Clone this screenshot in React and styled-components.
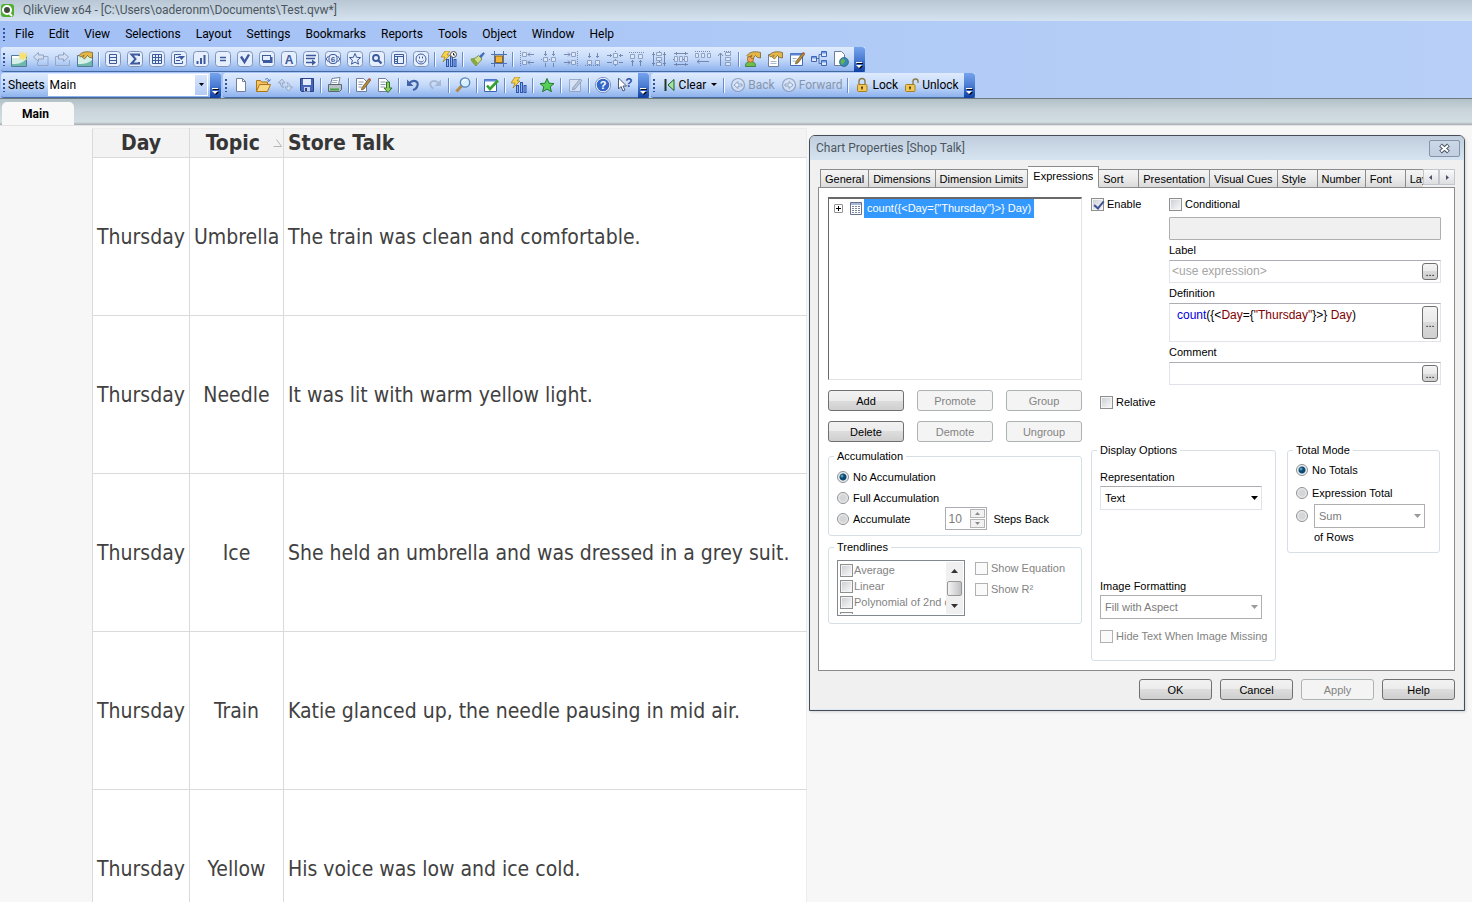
import React, { useState } from "react";
import styled, { createGlobalStyle, css } from "styled-components";

const GlobalStyle = createGlobalStyle`
  * {
    box-sizing: border-box;
  }

  body {
    margin: 0;
    overflow: hidden;
    background: #f7f7f7;
    color: #000;
    font-family: Roboto, "Open Sans", sans-serif;
    font-size: 12px;
  }

  button, input, select, textarea {
    margin: 0;
    font: inherit;
    color: inherit;
  }
`;

const AppCont = styled.div`
  display: flex;
  flex-direction: column;
  height: 100vh;
  overflow: hidden;
`;

/* ---------- window chrome ---------- */

const WindowTitle = styled.header`
  display: flex;
  align-items: center;
  gap: 7px;
  height: 21px;
  padding: 0 0 2px;
  background: linear-gradient(#b9c7d4, #d5e3f0);
  color: #4c5660;
`;

const CommandArea = styled.div`
  background: linear-gradient(90deg, #a2bff6, #b0cbf6 60%, #b8d0f7);
  border-bottom: 1px solid #6f7a80;
`;

const MenuBar = styled.nav`
  display: flex;
  align-items: center;
  gap: 1px;
  height: 26px;
  padding-left: 1px;
`;

const MenuItem = styled.button`
  border: 0;
  background: none;
  padding: 0 7px;
  line-height: 18px;
  font-size: 12px;
`;

const Grip = styled.span`
  flex: none;
  width: ${(props) => props.$width || 7}px;
  height: 14px;
  background: radial-gradient(circle, #33549c 1px, transparent 1px) 0 0 / 4px 4px
    repeat-y;
  margin-left: 1px;
`;

const ToolbarRow = styled.div`
  display: flex;
  gap: 2px;
  padding: 0 0 0 1px;
  margin-bottom: ${(props) => (props.$last ? 0 : 1)}px;
`;

const Toolbar = styled.div`
  display: flex;
  align-items: center;
  height: 25px;
  background: linear-gradient(#dfebfe, #c5daf9 50%, #8db2ee);
  border-bottom: 1px solid #44699f;
  border-radius: 3px 0 0 3px;
`;

const ToolButton = styled.button`
  display: flex;
  align-items: center;
  justify-content: center;
  gap: 2px;
  height: 22px;
  min-width: 22px;
  border: 0;
  background: none;
  padding: 0 ${(props) => (props.$text ? 3 : 0)}px;
  white-space: nowrap;
  color: ${(props) => (props.disabled ? "#8795ac" : "#000")};

  svg {
    flex: none;
    opacity: ${(props) => (props.disabled ? 0.75 : 1)};
  }
`;

const Separator = styled.span`
  width: 6px;
  height: 15px;
  background: linear-gradient(90deg, #6a8ccb 1px, #f3f8ff 1px) center / 2px 100%
    no-repeat;
`;

const Overflow = styled.button`
  display: flex;
  align-items: flex-end;
  justify-content: center;
  width: 11px;
  height: 25px;
  margin-left: ${(props) => props.$gap || 0}px;
  border: 0;
  padding: 0 0 3px;
  background: linear-gradient(#76a3ec, #4a7cd3 50%, #0d3ea2);
  border-radius: 0 3px 3px 0;
`;

const SheetLabel = styled.label`
  margin-right: 3px;
`;

const Combo = styled.span`
  position: relative;
  display: block;
  width: ${(props) => props.$width};

  svg {
    position: absolute;
    right: 4px;
    top: 50%;
    margin-top: -2px;
    pointer-events: none;
  }
`;

const SheetSelect = styled.select`
  appearance: none;
  display: block;
  width: 100%;
  height: 22px;
  border: 1px solid #fff;
  border-radius: 0;
  padding: 0 16px 0 1px;
  background: linear-gradient(#d7e5fb, #b3ccf5) right / 12px 100% no-repeat #fff;
`;

const SheetTabs = styled.div`
  display: flex;
  align-items: flex-end;
  height: 26px;
  padding-left: 2px;
  background: linear-gradient(#b2c0c7, #c8d4da 40%, #d2dde2 88%, #a5adb1);
`;

const SheetTab = styled.button`
  width: 72px;
  height: 23px;
  border: 0;
  border-radius: 5px 5px 0 0;
  padding: 0 5px 0 0;
  background: #f8f8f8;
  font: bold 12px Roboto, "Open Sans", sans-serif;
`;

/* ---------- straight table ---------- */

const Workspace = styled.main`
  position: relative;
  flex: 1;
  min-height: 0;
  overflow: hidden;
  padding: 2px 0 0 92px;
  border-top: 1px solid #e6e2e4;
`;

const TalkTable = styled.table`
  width: 715px;
  table-layout: fixed;
  border-collapse: collapse;
  background: #fff;
  color: #414141;
  font-family: "DejaVu Sans Condensed", "Noto Sans", sans-serif;
  font-size: 21px;

  th,
  td {
    border: 1px solid #dadada;
    padding: 0 4px;
    text-align: center;
    white-space: nowrap;
  }

  th {
    height: 29px;
    border-top-color: #ececec;
    background: #f3f3f3;
    line-height: 28px;
    color: #363636;
  }

  td {
    height: 158px;
  }

  th:last-child,
  td:last-child {
    text-align: left;
    border-right-color: #ececec;
  }
`;

const SortHead = styled.span`
  display: flex;
  align-items: center;
  justify-content: flex-end;
  gap: 13px;
  margin-right: -3px;
`;

/* ---------- dialog ---------- */

const Dialog = styled.section`
  position: absolute;
  top: 9px;
  right: 7px;
  width: 656px;
  border: 1px solid #454d58;
  border-radius: 6px 6px 0 0;
  background: #f0f0f0;
  box-shadow: inset -1px -1px 0 #dfe8f0, 1px 1px 3px rgba(0, 0, 0, 0.15);
  font-family: "Liberation Sans", Arial, sans-serif;
  font-size: 11px;
  line-height: 14px;
`;

const DialogTitle = styled.div`
  display: flex;
  align-items: center;
  justify-content: space-between;
  height: 24px;
  padding: 0 4px 0 6px;
  border-radius: 5px 5px 0 0;
  background: linear-gradient(#bfcddc, #d6e4f2);
  color: #4c5660;
  font: 12px Roboto, "Open Sans", sans-serif;
`;

const CloseButton = styled.button`
  display: flex;
  align-items: center;
  justify-content: center;
  width: 31px;
  height: 17px;
  border: 1px solid #8592a8;
  border-radius: 2px;
  background: linear-gradient(#cad7e6, #c0cfe1);
  padding: 0;
`;

const DialogBody = styled.div`
  padding: 6px 9px 10px 8px;
`;

const TabStrip = styled.div`
  display: flex;
  align-items: flex-end;
  height: 22px;
  margin-bottom: -1px;
  padding-left: 2px;
`;

const TabList = styled.div`
  display: flex;
  align-items: flex-end;
  flex: 1;
  min-width: 0;
  height: 22px;
  overflow: hidden;
`;

const Tab = styled.button`
  flex: none;
  min-width: 40px;
  height: 19px;
  border: 1px solid #8b8b8b;
  border-left-width: 0;
  padding: 0 4px;
  background: linear-gradient(#f4f4f4, #ebebeb 50%, #dadada);
  text-align: left;

  &:first-child {
    border-left-width: 1px;
  }

  ${(props) =>
    props.$active &&
    css`
      height: 22px;
      padding: 0 5px 3px;
      background: #fff;
      border-bottom-color: #fff;
    `}
`;

const TabScroll = styled.button`
  display: flex;
  align-items: center;
  justify-content: center;
  align-self: flex-start;
  width: 16px;
  height: 16px;
  margin-top: 3px;
  border: 1px solid #c3c6cc;
  padding: 0;
  background: linear-gradient(#fafafa, #dedee2);
`;

const Panel = styled.div`
  display: grid;
  grid-template-columns: 254px 1fr;
  column-gap: 9px;
  border: 1px solid #8b8b8b;
  padding: 9px 13px 9px 9px;
  background: #fff;
`;

const ExpressionTree = styled.div`
  display: flex;
  align-items: flex-start;
  height: 183px;
  padding: 0 0 0 5px;
  border: 1px solid #e3e3e3;
  border-top: 2px solid #696969;
  border-left-color: #696969;
`;

const TreeToggle = styled.button`
  width: 9px;
  height: 9px;
  margin: 5px 7px 0 0;
  border: 1px solid #919191;
  border-radius: 1px;
  padding: 0;
  background: linear-gradient(#000, #000) center / 5px 1px no-repeat,
    linear-gradient(#000, #000) center / 1px 5px no-repeat, #fff;
`;

const TreeItem = styled.span`
  height: 19px;
  margin-left: 2px;
  padding: 0 3px;
  background: #3399ff;
  color: #fff;
  line-height: 19px;
`;

const ButtonGrid = styled.div`
  display: grid;
  grid-template-columns: repeat(3, 76px);
  justify-content: space-between;
  row-gap: 10px;
  margin: 10px 0 7px;
`;

const PushButton = styled.button`
  height: 21px;
  border: 1px solid #707070;
  border-radius: 3px;
  padding: 0;
  background: linear-gradient(#f2f2f2, #ebebeb 50%, #dddddd 50%, #cfcfcf);

  &:disabled {
    border-color: #adb2b5;
    background: #f4f4f4;
    color: #838383;
  }
`;

const Footer = styled.div`
  display: flex;
  justify-content: flex-end;
  gap: 8px;
  padding-top: 8px;

  ${PushButton} {
    width: 73px;
  }
`;

const Group = styled.fieldset`
  min-width: 0;
  margin: ${(props) => props.$top || 0}px 0 0;
  border: 1px solid #d5dfe5;
  border-radius: 3px;
  padding: 0 8px ${(props) => props.$bottom}px;
`;

const Legend = styled.legend`
  margin-left: -3px;
  padding: 0 3px;
`;

const Choice = styled.label`
  display: flex;
  align-items: center;
  gap: ${(props) => props.$gap || 3}px;
  height: ${(props) => props.$height || 14}px;
  color: ${(props) => (props.$disabled ? "#838383" : "#000")};
  white-space: nowrap;
`;

const Check = styled.input.attrs({ type: "checkbox" })`
  appearance: none;
  flex: none;
  position: relative;
  width: 13px;
  height: 13px;
  border: 1px solid #8e8f8f;
  background: linear-gradient(135deg, #cdd1d6, #f6f6f6) center / 9px 9px no-repeat
    #f4f4f4;

  &:disabled {
    border-color: #b1b1b1;
    background: #fafafa;
  }

  &:checked::after {
    content: "";
    position: absolute;
    left: 4px;
    top: 0;
    width: 4px;
    height: 8px;
    border: solid #3f5394;
    border-width: 0 2px 2px 0;
    transform: rotate(40deg);
  }
`;

const Radio = styled.input.attrs({ type: "radio" })`
  appearance: none;
  flex: none;
  width: 12px;
  height: 12px;
  border: 1px solid #8e8f8f;
  border-radius: 50%;
  background: radial-gradient(circle, #d4d6d8 3px, #f2f2f2 5px);

  &:checked {
    background: radial-gradient(circle at 4px 4px, #7cc8e6 0, transparent 2px),
      radial-gradient(circle, #0f4a72 3px, #e9eff3 4px);
  }
`;

const RadioRow = styled.div`
  display: flex;
  align-items: center;
  height: ${(props) => props.$height}px;
`;

const AccumulationRows = styled.div`
  padding-top: 3px;
`;

const Spinner = styled.span`
  display: flex;
  align-items: center;
  width: 42px;
  height: 23px;
  margin: 0 6px 0 35px;
  border: 1px solid #abadb3;
  padding: 0 1px 0 2px;
  background: #fff;
`;

const SpinnerInput = styled.input`
  flex: 1;
  min-width: 0;
  border: 0;
  padding: 0;
  background: none;
  color: #7b7b7b;
  font-size: 12px;
`;

const SpinButtons = styled.span`
  display: flex;
  flex-direction: column;
  gap: 1px;
`;

const SpinButton = styled.button`
  display: flex;
  align-items: center;
  justify-content: center;
  width: 15px;
  height: 9px;
  border: 1px solid #b5b5b5;
  padding: 0;
  background: #f2f2f2;
`;

const TrendRow = styled.div`
  display: flex;
  gap: 10px;
  padding-top: 6px;
`;

const TrendList = styled.div`
  display: flex;
  width: 128px;
  height: 56px;
  overflow: hidden;
  border: 1px solid #828790;
  padding: 1px 1px 1px 2px;
`;

const TrendItems = styled.div`
  flex: 1;
  min-width: 0;
  overflow: hidden;

  ${Check} {
    border-color: #8e8f8f;
    background: linear-gradient(135deg, #cdd1d6, #f6f6f6) center / 9px 9px
      no-repeat #f4f4f4;
  }
`;

const ScrollBar = styled.div`
  display: flex;
  flex-direction: column;
  align-items: center;
  justify-content: space-between;
  width: 17px;
  background: #f0f0f0;
`;

const ScrollArrow = styled.button`
  display: flex;
  align-items: center;
  justify-content: center;
  width: 17px;
  height: 17px;
  border: 0;
  padding: 0;
  background: none;
`;

const ScrollThumb = styled.span`
  width: 15px;
  height: 15px;
  border: 1px solid #989898;
  border-radius: 2px;
  background: linear-gradient(90deg, #f3f3f3, #d6d6d8 60%, #bfc0c4);
`;

const TrendChecks = styled.div`
  display: flex;
  flex-direction: column;
  gap: 7px;
  padding-top: 1px;
`;

const Settings = styled.div`
  display: flex;
  flex-direction: column;
`;

const FieldGrid = styled.div`
  display: grid;
  grid-template-columns: 78px 1fr;
  align-items: start;
`;

const Fields = styled.div`
  display: flex;
  flex-direction: column;
`;

const FieldLabel = styled.label`
  display: block;
  margin: 3px 0;
`;

const FieldBox = styled.div`
  display: flex;
  align-items: stretch;
  height: ${(props) => props.$height || 23}px;
  border: 1px solid #e2e3ea;
  border-top-color: #abadb3;
  padding: 2px;
  background: #fff;
`;

const TextField = styled.input`
  flex: 1;
  min-width: 0;
  border: 0;
  padding: 0 0 2px;
  background: none;
  font-size: 12px;

  &::placeholder {
    color: #a5a5a5;
  }
`;

const ConditionField = styled.input`
  width: 100%;
  height: 23px;
  margin-top: 6px;
  border: 1px solid #afafaf;
  border-radius: 1px;
  background: #f0f0f0;
`;

const MoreButton = styled.button`
  width: 16px;
  border: 1px solid #707070;
  border-radius: 3px;
  padding: 0;
  background: linear-gradient(#f4f4f4, #e9e9e9 50%, #dadada 50%, #d0d0d0);
`;

const CodeField = styled.div`
  display: grid;
  flex: 1;
  font-size: 12px;
  line-height: 16px;
`;

const CodeInput = styled.textarea`
  grid-area: 1 / 1;
  border: 0;
  padding: 1px 5px;
  background: none;
  color: transparent;
  caret-color: #000;
  resize: none;
  overflow: hidden;
`;

const CodeHighlight = styled.pre`
  grid-area: 1 / 1;
  margin: 0;
  padding: 1px 5px;
  font: inherit;
  pointer-events: none;
`;

const Fn = styled.span`
  color: #0000e0;
`;

const Field = styled.span`
  color: #800000;
`;

const RelativeRow = styled.div`
  padding: 10px 0 34px 9px;
`;

const Groups = styled.div`
  display: grid;
  grid-template-columns: 185px 153px;
  column-gap: 11px;
  align-items: start;
`;

const OptionLabel = styled.label`
  display: block;
  padding-top: ${(props) => props.$top}px;
  margin-bottom: 2px;
`;

const DropDown = styled.select`
  appearance: none;
  display: block;
  width: 100%;
  height: 24px;
  border: 1px solid #e2e3ea;
  border-top-color: #abadb3;
  border-radius: 0;
  padding: 0 16px 0 4px;
  background: #fff;
  color: #000;

  &:disabled {
    border-color: #afafaf;
    color: #7b7b7b;
    opacity: 1;
  }
`;

const HideRow = styled.div`
  padding-top: 10px;
`;

const TotalRows = styled.div`
  padding-top: 1px;
`;

const OfRows = styled.div`
  padding: 3px 0 0 18px;
`;

/* ---------- drawings ---------- */

const Svg = ({ w = 16, h = 16, children }) => (
  <svg width={w} height={h} viewBox={`0 0 ${w} ${h}`} fill="none" aria-hidden="true">
    {children}
  </svg>
);

const Arrow = ({ color = "#000" }) => (
  <Svg w={7} h={4}>
    <path d="M0 0h7L3.500 4z" fill={color} />
  </Svg>
);

const Boxed = ({ children }) => (
  <Svg>
    <rect x=".5" y=".5" width="15" height="15" rx="3" fill="#e6effd" stroke="#8094b8" />
    {children}
  </Svg>
);

const blue = "#3d5a9e";
const grey = "#7f90ad";

const Pencil = ({ color = "#b98a35" }) => (
  <>
    <path d="M7 10.500 13.500 2l2 1.500L9 12l-2.500 1z" fill={color} stroke="#4d4433" strokeWidth=".6" />
    <path d="m13.500 2 .8-1 1.700 1.300-.6 1z" fill="#c4432f" />
  </>
);

const Bolt = () => (
  <path d="M4 0h5L6 4h3L2 11l2-5H0z" fill="#f7d34c" stroke="#a27a1c" strokeWidth=".7" />
);

const Bars = () => (
  <>
    <rect x="5.500" y="8.500" width="2" height="7" fill="#8db2f0" stroke="#2e55ab" />
    <rect x="9.500" y="5.500" width="2" height="10" fill="#8db2f0" stroke="#2e55ab" />
    <rect x="13" y="8.500" width="2" height="7" fill="#8db2f0" stroke="#2e55ab" />
  </>
);

const Hand = () => (
  <path d="M2 4.500C5 .5 10 0 15.500 1.500V7l-3-.5-2-2L7.500 8 5.500 6.500l1.500-2L3.500 6z" fill="#e3b646" stroke="#6b561f" strokeWidth=".7" />
);

const Sheet = ({ x = 2 }) => (
  <path d={`M${x} 1.500h7l3 3v10h-10z`} fill="#fff" stroke="#6f7f9b" />
);

const Padlock = ({ open }) => (
  <Svg>
    <path
      d={open ? "M9 8V4.500a2.500 2.500 0 0 1 5 0V6" : "M5 8V4.500a3 3 0 0 1 6 0V8"}
      stroke="#8a7a4c"
      strokeWidth="1.400"
    />
    <rect x={open ? 1.5 : 3.5} y="7.500" width="9.500" height="7" rx="1" fill="#f2c852" stroke="#a87f25" />
    <path d={open ? "M6 9.500v3M5 10.500h2" : "M8 9.500v3M7 10.500h2"} stroke="#4e3a0c" strokeWidth="1.300" />
  </Svg>
);

const CircleArrow = ({ flip }) => (
  <Svg>
    <circle cx="8" cy="8" r="6.500" fill="#d9e4f6" stroke={grey} strokeWidth="1.200" />
    <path
      d={flip ? "M4 7h4V4.500L12 8l-4 3.500V9H4z" : "M12 7H8V4.500L4 8l4 3.500V9h4z"}
      fill="#eef4fd"
      stroke={grey}
    />
  </Svg>
);

// dotted guide line with two boxes and small arrows
const Align = ({ guide, boxes, arrows }) => (
  <Svg>
    <path d={guide} stroke="#5b6e96" strokeDasharray="1 1" />
    <path d={boxes} fill="#e3ecfa" stroke="#7d8fb3" />
    <path d={arrows} stroke="#5b6e96" />
  </Svg>
);

const icons = {
  newSheet: (
    <Svg w={18}>
      <path d="M1.500 4.500h15v11h-15z" fill="#d6f0e8" stroke="#55799a" />
      <path d="M2 15h14V8C12 13 6 13 2 13z" fill="#6fb8ac" />
      <path d="M2 5h7v2H2z" fill="#fff" />
      <path d="m13 0 1 2.500L17 1l-1 3 2 1-2 1 1 3-3-1.500L13 10l-1-2.500L9 9l1-3-2-1 2-1-1-3 3 1.500z" fill="#f6e274" />
    </Svg>
  ),
  prevSheet: (
    <Svg>
      <path d="M5.500 4V1.500L.5 6l5 4.500V8h5V4z" fill="#d5dfef" stroke={grey} />
      <path d="M11 5.500h4v9H4.500V11" stroke="#8d9cb8" />
    </Svg>
  ),
  nextSheet: (
    <Svg>
      <path d="M8.500 4V1.500l5 4.500-5 4.500V8h-5V4z" fill="#d5dfef" stroke={grey} />
      <path d="M3 5.500H.5v9h14V9" stroke="#8d9cb8" />
    </Svg>
  ),
  sheetProps: (
    <Svg>
      <path d="M.5 4.500h15v11H.5z" fill="#d6f0e8" stroke="#55799a" />
      <path d="M1 15h14V9C11 13 5 13 1 13z" fill="#6fb8ac" />
      <Hand />
    </Svg>
  ),
  list: (
    <Boxed>
      <path d="M4.500 3.500h7v9h-7zM4.500 6.500h7M4.500 9.500h7" stroke={blue} />
    </Boxed>
  ),
  stats: (
    <Boxed>
      <path d="M12 5V3.500H4.500L8.500 8l-4 4.500H12V11" stroke={blue} strokeWidth="2" />
    </Boxed>
  ),
  tableBox: (
    <Boxed>
      <path d="M3.500 3.500h9v9h-9zM3.500 6.500h9M3.500 9.500h9M6.500 3.500v9M9.500 3.500v9" stroke={blue} />
    </Boxed>
  ),
  multi: (
    <Boxed>
      <path d="M10 3.500H3.500v9h8V10M5 6.500h3M5 9.500h4" stroke={blue} />
      <path d="M7 5h7l-3.500 4z" fill={blue} />
    </Boxed>
  ),
  chart: (
    <Boxed>
      <path d="M4.500 13v-3M8 13V7M11.500 13V4" stroke={blue} strokeWidth="2" />
    </Boxed>
  ),
  input: (
    <Boxed>
      <path d="M5 6.500h6M5 9.500h6" stroke={blue} strokeWidth="1.500" />
    </Boxed>
  ),
  current: (
    <Boxed>
      <path d="M4 5.500 7.500 11 12 3.500" stroke={blue} strokeWidth="2.400" />
    </Boxed>
  ),
  buttonObj: (
    <Boxed>
      <rect x="3.500" y="4.500" width="8" height="5" stroke={blue} />
      <path d="M4 11h8.500V6" stroke={blue} strokeWidth="2" />
    </Boxed>
  ),
  textObj: (
    <Boxed>
      <text x="8" y="12.500" textAnchor="middle" fontSize="12" fontWeight="bold" fontFamily="Liberation Sans" fill={blue}>
        A
      </text>
    </Boxed>
  ),
  lineObj: (
    <Boxed>
      <path d="M3 4.500h10M3 7.500h9M3 11.500h6" stroke={blue} strokeWidth="1.600" />
      <path d="m9 8.500 4 3-4 3z" fill={blue} />
    </Boxed>
  ),
  slider: (
    <Boxed>
      <path d="m3.500 5-2.500 3 2.500 3M12.500 5 15 8l-2.500 3" stroke={blue} />
      <rect x="4" y="3.500" width="8" height="9" rx="3" stroke={blue} />
      <text x="8" y="11" textAnchor="middle" fontSize="8" fontWeight="bold" fontFamily="Liberation Sans" fill={blue}>
        6
      </text>
    </Boxed>
  ),
  bookmarkObj: (
    <Boxed>
      <path d="m8 2.500 1.600 3.800 4 .3-3 2.600.9 4L8 11.100l-3.500 2.100.9-4-3-2.600 4-.3z" stroke={blue} />
    </Boxed>
  ),
  searchObj: (
    <Boxed>
      <circle cx="7" cy="7" r="3" stroke={blue} strokeWidth="1.800" />
      <path d="m9.500 9.500 3 3" stroke={blue} strokeWidth="2.400" />
    </Boxed>
  ),
  container: (
    <Boxed>
      <path d="M3.500 3.500h9v9h-9zM3.500 5.500h9M6.500 5v7" stroke={blue} />
      <path d="M4 8.500h2M4 10.500h2" stroke={blue} />
    </Boxed>
  ),
  custom: (
    <Boxed>
      <circle cx="8" cy="8" r="5" stroke={blue} />
      <path d="M6.500 5.500v2M9.500 5.500v2M5.500 9.500c1 2 4 2 5 0" stroke={blue} />
    </Boxed>
  ),
  timeChart: (
    <Svg>
      <Bars />
      <Bolt />
      <circle cx="12.500" cy="3.500" r="3" fill="#fff" stroke="#4c4c4c" />
      <path d="M12.500 2v2h1.500" stroke="#222" />
    </Svg>
  ),
  brush: (
    <Svg>
      <path d="m10.500 5 4-3.500 1 1L12 7z" fill="#3a6fd0" stroke="#3a5a97" strokeWidth=".6" />
      <path d="M2 8c3 0 5-1 7.500-3.500L13 8c-2 3-5 5-6 7C5 13 3 11 2 8z" fill="#cfe08d" stroke="#7a8d4a" />
      <path d="M2 8c2 4 4 5 5 7l2-3-4-4.500z" fill="#87a63e" />
    </Svg>
  ),
  designGrid: (
    <Svg>
      <path d="M3.500 0v16M12.500 0v16M0 3.500h16M0 12.500h16" stroke="#4e72b7" />
      <rect x="4.500" y="5" width="7" height="6.500" fill="#f2b535" stroke="#91671b" />
    </Svg>
  ),
  alignLeft: (
    <Align guide="M1.500 0v16" boxes="M3.500 1.500h4v4h-4zM3.500 9.500h4v4h-4z" arrows="M9 3.500h6M11 1.500l-2 2 2 2M9 11.500h6M11 9.500l-2 2 2 2" />
  ),
  centerH: (
    <Align guide="M0 8.500h16" boxes="M2.500 6.500h4v4h-4zM10.500 6.500h4v4h-4z" arrows="M4.500 0v5M3 3.500h3M12.500 0v5M11 3.500h3M4.500 12v4M12.500 12v4" />
  ),
  alignRight: (
    <Align guide="M14.500 0v16" boxes="M8.500 1.500h4v4h-4zM8.500 9.500h4v4h-4z" arrows="M1 3.500h6M5 1.500l2 2-2 2M1 11.500h6M5 9.500l2 2-2 2" />
  ),
  alignBottom: (
    <Align guide="M0 14.500h16" boxes="M2.500 9.500h4v4h-4zM10.500 9.500h4v4h-4z" arrows="M4.500 2v5M3 5.500h3M12.500 2v5M11 5.500h3" />
  ),
  centerV: (
    <Align guide="M8.500 0v16" boxes="M6.500 2.500h4v4h-4zM6.500 9.500h4v4h-4z" arrows="M0 4.500h5M3.500 3v3M16 4.500h-4M13.500 3v3M0 11.500h5M16 11.500h-4" />
  ),
  alignTop: (
    <Align guide="M0 1.500h16" boxes="M1.500 3.500h4v4h-4zM9.500 3.500h4v4h-4z" arrows="M3.500 9v6M2 10.500h3M11.500 9v6M10 10.500h3" />
  ),
  spaceV: (
    <Align guide="M8.500 0v16" boxes="M5.500 1.500h5v3h-5zM5.500 6.500h5v3h-5zM5.500 11.500h5v3h-5z" arrows="M2.500 1v14M1 3.500h3M1 12.500h3M13.500 1v14M12 3.500h3M12 12.500h3" />
  ),
  spaceH: (
    <Align guide="M0 8.500h16" boxes="M1.500 5.500h3v5h-3zM6.500 5.500h3v5h-3zM11.500 5.500h3v5h-3z" arrows="M1 2.500h14M3.500 1v3M12.500 1v3M1 13.500h14M3.500 12v3M12.500 12v3" />
  ),
  stackLeft: (
    <Align guide="M0 .5h16" boxes="M.5 2.500h3v4h-3zM6.500 2.500h3v4h-3zM12.500 2.500h3v4h-3z" arrows="M2 10.500h12M4.500 8.500l-2.500 2 2.500 2" />
  ),
  stackTop: (
    <Align guide="M7 .5h8" boxes="M8.500 1.500h5v3h-5zM8.500 6.500h5v3h-5zM8.500 11.500h5v3h-5z" arrows="M3.500 2v13M1 5l2.500-3L6 5" />
  ),
  userPrefs: (
    <Svg>
      <path d="M.5 15.500c0-4 2-5 5-5s5 1 5 5z" fill="#6cbf4c" stroke="#396f2a" strokeWidth=".8" />
      <circle cx="5.500" cy="8" r="3.200" fill="#f5a35a" stroke="#b1661f" strokeWidth=".8" />
      <Hand />
    </Svg>
  ),
  docProps: (
    <Svg>
      <path d="M1.500 3.500h10v12h-10z" fill="#fff" stroke="#6f7f9b" />
      <path d="M3.500 10.500h6M3.500 12.500h6" stroke="#a9b7cf" />
      <Hand />
    </Svg>
  ),
  editSheet: (
    <Svg>
      <path d="M1.500 2.500h12v12h-12z" fill="#fff" stroke="#476bb2" />
      <path d="M1.500 2.500h12v2h-12z" fill="#5c86d4" />
      <path d="M3.500 7.500h4M3.500 10h3" stroke="#9db0d1" />
      <Pencil />
    </Svg>
  ),
  tableViewer: (
    <Svg>
      <path d="M6 7.500h2M8 3.500v9M8 3.500h2M8 12.500h2" stroke="#506ea8" />
      <path d="M.5 5.500h5v5h-5zM10.500.5h5v5h-5zM10.500 9.500h5v5h-5z" fill="#dce9fd" stroke="#4167b4" />
      <path d="M1 6h4v1.500H1zM11 1h4v1.500h-4zM11 10h4v1.500h-4z" fill="#6f9be8" />
    </Svg>
  ),
  webView: (
    <Svg>
      <path d="M1.500.5h7l3 3v11h-10z" fill="#fff" stroke="#6f7f9b" />
      <circle cx="11" cy="11" r="4.500" fill="#3987b5" stroke="#2a607f" strokeWidth=".7" />
      <path d="M8 9c2-2 4-1 4 1s-2 1-2 4c-2-1-3-3-2-5z" fill="#62b64f" />
    </Svg>
  ),
  newDoc: (
    <Svg>
      <path d="M3.500 1.500h6l3 3v10h-9z" fill="#fff" stroke="#72809b" />
      <path d="M9.500 1.500v3h3" stroke="#72809b" />
    </Svg>
  ),
  open: (
    <Svg>
      <path d="M1.500 14.500v-11h4l1 1.500h6v2" fill="#f6c463" stroke="#a9741b" />
      <path d="m1.500 14.500 3-7h11l-3 7z" fill="#fbd883" stroke="#a9741b" />
      <path d="M10 2.500c2-1.500 4-1 4 1.500M12.500 3.500l1.500 1 1.500-2" stroke="#4973b9" />
    </Svg>
  ),
  reload: (
    <Svg>
      <path d="M5 2 1 6h2.500c0 3 1 4 3 4.500C5.500 9 5.500 8 5.500 6H8z" fill="#c3cfe2" stroke="#7e8eaa" strokeWidth=".8" />
      <path d="m11.500 14 4-4H13c0-3-1-4-3-4.500 1 1.500 1 2.500 1 4.500H8z" fill="#d9e2f0" stroke="#7e8eaa" strokeWidth=".8" />
    </Svg>
  ),
  save: (
    <Svg>
      <path d="M1.500 1.500h13v13h-12l-1-1z" fill="#4664b5" stroke="#2b4186" />
      <path d="M4 2h8v6H4z" fill="#e4ecfb" />
      <path d="M5 10h6v4.500H5z" fill="#c5d1ec" />
      <path d="M6 11h2v3H6z" fill="#2b4186" />
    </Svg>
  ),
  print: (
    <Svg>
      <path d="m5 1.500 8-1-1.500 7h-8z" fill="#fff" stroke="#72809b" />
      <path d="M1.500 7.500h13v5l-2 2h-11z" fill="#b9c2c9" stroke="#5b6670" />
      <path d="M3 12.500h9" stroke="#45a545" strokeWidth="2" />
      <path d="M5.500 3.500h5M5 5.500h5" stroke="#9caac0" />
    </Svg>
  ),
  editScript: (
    <Svg>
      <Sheet x={1.5} />
      <path d="M3.500 5h5M3.500 7.500h4M3.500 10h3" stroke="#8b99b4" />
      <Pencil />
    </Svg>
  ),
  runScript: (
    <Svg>
      <Sheet x={1.5} />
      <path d="M3.500 5h5M3.500 7.500h5M3.500 10h4" stroke="#8b99b4" />
      <path d="M9.500 5h3v6h2.500L11 15.500 7 11h2.500z" fill="#8ed05e" stroke="#39752a" />
    </Svg>
  ),
  undo: (
    <Svg>
      <path d="M4 6.500C8 2 14 4 12.500 8.500 12 10.500 10 12.500 8 13" stroke="#4262a8" strokeWidth="2.200" />
      <path d="M2 2.500V9h6.500z" fill="#4262a8" />
    </Svg>
  ),
  redo: (
    <Svg>
      <path d="M12 6.500C8 2 2 4 3.500 8.500c.5 1.500 1.500 2.500 3 3" stroke="#9cadc9" strokeWidth="2" />
      <path d="M14 2.500V9H7.500z" fill="#9cadc9" />
    </Svg>
  ),
  search: (
    <Svg>
      <path d="m6.500 9-5 5.500" stroke="#b48a45" strokeWidth="3" />
      <circle cx="10" cy="5.500" r="4.700" fill="#d5efff" stroke="#5582b8" strokeWidth="1.300" />
      <path d="M7.500 4.500c1-2 3-2 4-1.500" stroke="#fff" strokeWidth="1.300" />
    </Svg>
  ),
  selections: (
    <Svg>
      <path d="M1.500 2.500h12v12h-12z" fill="#fff" stroke="#3d64b3" />
      <path d="M1.500 2.500h12v2h-12z" fill="#5e88d8" />
      <path d="M4 8.500 7 12l8-8.500" stroke="#35a12f" strokeWidth="2.600" />
    </Svg>
  ),
  quickChart: (
    <Svg>
      <Bars />
      <Bolt />
    </Svg>
  ),
  star: (
    <Svg>
      <path d="m8 1.500 2 4.700 5 .4-3.800 3.200 1.200 4.900L8 12.100l-4.400 2.600 1.200-4.900L1 6.600l5-.4z" fill="#55cf58" stroke="#227a2b" />
    </Svg>
  ),
  notes: (
    <Svg>
      <path d="M2.500 2.500h11v12h-11z" fill="#dce5f4" stroke="#8b9ab5" />
      <path d="m6 10.500 7-8.500 2 1.500-7 8.500-2.500 1z" fill="#b3c0d6" stroke="#71829f" strokeWidth=".8" />
    </Svg>
  ),
  help: (
    <Svg>
      <circle cx="8" cy="8" r="7" fill="#3567c7" stroke="#fff" strokeWidth="1.300" />
      <circle cx="8" cy="8" r="7.600" stroke="#31549c" strokeWidth=".6" />
      <text x="8" y="12" textAnchor="middle" fontSize="11" fontWeight="bold" fontFamily="Liberation Sans" fill="#fff">
        ?
      </text>
    </Svg>
  ),
  whatsThis: (
    <Svg>
      <path d="M1.500 1v11l2.500-2.500L6 14l2-1-2-4h3.500z" fill="#fff" stroke="#4b5977" />
      <text x="12" y="10" textAnchor="middle" fontSize="12" fontWeight="bold" fontFamily="Liberation Sans" fill="#2d52a5">
        ?
      </text>
    </Svg>
  ),
};

const gripWidth = 6;

// a bar stands for a separator, a dash in front for a disabled tool
const objectTools = `newSheet -prevSheet -nextSheet sheetProps | list stats tableBox multi
  chart input current buttonObj textObj lineObj slider bookmarkObj searchObj container
  custom | timeChart | brush designGrid | -alignLeft -centerH -alignRight -alignBottom
  -centerV -alignTop -spaceV -spaceH -stackLeft -stackTop | userPrefs docProps editSheet
  tableViewer webView`.split(/\s+/);

const standardTools = `newDoc open -reload save | print | editScript runScript | undo -redo |
  search | selections | quickChart | star | -notes | help whatsThis`.split(/\s+/);

const menus = [
  "File",
  "Edit",
  "View",
  "Selections",
  "Layout",
  "Settings",
  "Bookmarks",
  "Reports",
  "Tools",
  "Object",
  "Window",
  "Help",
];

const talks = [
  ["Thursday", "Umbrella", "The train was clean and comfortable."],
  ["Thursday", "Needle", "It was lit with warm yellow light."],
  ["Thursday", "Ice", "She held an umbrella and was dressed in a grey suit."],
  ["Thursday", "Train", "Katie glanced up, the needle pausing in mid air."],
  ["Thursday", "Yellow", "His voice was low and ice cold."],
];

const tabs = [
  "General",
  "Dimensions",
  "Dimension Limits",
  "Expressions",
  "Sort",
  "Presentation",
  "Visual Cues",
  "Style",
  "Number",
  "Font",
  "Layout",
];

const trends = ["Average", "Linear", "Polynomial of 2nd d", "Polynomial of 3rd d"];

function Tools({ names }) {
  return names.map((item, i) => {
    if (item === "|") return <Separator key={i} />;
    const name = item.replace("-", "");
    return (
      <ToolButton key={i} aria-label={name} disabled={item[0] === "-"}>
        {icons[name]}
      </ToolButton>
    );
  });
}

function MoreTools({ gap }) {
  return (
    <Overflow aria-label="More buttons" $gap={gap}>
      <Svg w={7} h={7}>
        <path d="M1 1h6v1H1zM1 4h6L4 7z" fill="#000" />
        <path d="M0 0h6v1H0zM0 3h6L3 6z" fill="#fff" />
      </Svg>
    </Overflow>
  );
}

function Toolbars() {
  return (
    <>
      <ToolbarRow>
        <Toolbar>
          <Grip $width={gripWidth} />
          <Tools names={objectTools} />
          <MoreTools gap={2} />
        </Toolbar>
      </ToolbarRow>
      <ToolbarRow $last>
        <Toolbar>
          <Grip $width={gripWidth} />
          <SheetLabel htmlFor="sheet">Sheets</SheetLabel>
          <Combo $width="160px">
            <SheetSelect id="sheet">
              <option>Main</option>
            </SheetSelect>
            <Svg w={5} h={3}>
              <path d="M0 0h5L2.500 3z" fill="#000" />
            </Svg>
          </Combo>
          <MoreTools gap={2} />
        </Toolbar>
        <Toolbar>
          <Grip $width={gripWidth} />
          <Tools names={standardTools} />
          <MoreTools gap={2} />
        </Toolbar>
        <Toolbar>
          <Grip $width={gripWidth} />
          <ToolButton $text>
            <Svg>
              <path d="M4.500 2v12" stroke="#20392a" strokeWidth="2" />
              <path d="M13 2.500v11L7 8z" fill="#a5e3a1" stroke="#1d5b2a" />
            </Svg>
            Clear
            <Svg w={10} h={4}>
              <path d="M3 0h6L6 3z" fill="#000" />
            </Svg>
          </ToolButton>
          <Separator />
          <ToolButton $text disabled>
            <CircleArrow />
            Back
          </ToolButton>
          <ToolButton $text disabled>
            <CircleArrow flip />
            Forward
          </ToolButton>
          <Separator />
          <ToolButton $text>
            <Padlock />
            Lock
          </ToolButton>
          <ToolButton $text>
            <Padlock open />
            Unlock
          </ToolButton>
          <MoreTools gap={2} />
        </Toolbar>
      </ToolbarRow>
    </>
  );
}

function StoreTalk() {
  return (
    <TalkTable>
      <colgroup>
        <col style={{ width: 97 }} />
        <col style={{ width: 94 }} />
        <col />
      </colgroup>
      <thead>
        <tr>
          <th>Day</th>
          <th>
            <SortHead>
              Topic
              <Svg w={9} h={8}>
                <path d="M.5 7.500h8M3.500.5l5 7" stroke="#b5b5b5" />
              </Svg>
            </SortHead>
          </th>
          <th>Store Talk</th>
        </tr>
      </thead>
      <tbody>
        {talks.map(([day, topic, talk]) => (
          <tr key={topic}>
            <td>{day}</td>
            <td>{topic}</td>
            <td>{talk}</td>
          </tr>
        ))}
      </tbody>
    </TalkTable>
  );
}

function ExpressionList() {
  return (
    <>
      <ExpressionTree>
        <TreeToggle aria-label="Expand" />
        <Svg w={12} h={19}>
          <path d="M.5 3.500h11v12H.5z" fill="#fff" stroke="#66718c" />
          <path d="M1 4h10v2H1z" fill="#a9b7dc" />
          <path d="M2 7.500h8M2 9.500h8M2 11.500h8M2 13.500h8" stroke="#7c8699" strokeDasharray="2 1" />
        </Svg>
        <TreeItem>{'count({<Day={"Thursday"}>} Day)'}</TreeItem>
      </ExpressionTree>
      <ButtonGrid>
        <PushButton>Add</PushButton>
        <PushButton disabled>Promote</PushButton>
        <PushButton disabled>Group</PushButton>
        <PushButton>Delete</PushButton>
        <PushButton disabled>Demote</PushButton>
        <PushButton disabled>Ungroup</PushButton>
      </ButtonGrid>
    </>
  );
}

function Accumulation() {
  const [mode, setMode] = useState("none");
  const radio = (value) => (
    <Radio name="accumulation" checked={mode === value} onChange={() => setMode(value)} />
  );

  return (
    <Group $bottom={6}>
      <Legend>Accumulation</Legend>
      <AccumulationRows>
        <RadioRow $height={21}>
          <Choice $gap={4}>{radio("none")}No Accumulation</Choice>
        </RadioRow>
        <RadioRow $height={21}>
          <Choice $gap={4}>{radio("full")}Full Accumulation</Choice>
        </RadioRow>
        <RadioRow $height={21}>
          <Choice $gap={4}>{radio("steps")}Accumulate</Choice>
          <Spinner>
            <SpinnerInput id="steps" defaultValue="10" disabled />
            <SpinButtons>
              <SpinButton aria-label="More steps" disabled>
                <Svg w={5} h={3}>
                  <path d="M0 3h5L2.500 0z" fill="#8a8a8a" />
                </Svg>
              </SpinButton>
              <SpinButton aria-label="Fewer steps" disabled>
                <Svg w={5} h={3}>
                  <path d="M0 0h5L2.500 3z" fill="#8a8a8a" />
                </Svg>
              </SpinButton>
            </SpinButtons>
          </Spinner>
          <label htmlFor="steps">Steps Back</label>
        </RadioRow>
      </AccumulationRows>
    </Group>
  );
}

function Trendlines() {
  return (
    <Group $top={4} $bottom={7}>
      <Legend>Trendlines</Legend>
      <TrendRow>
        <TrendList>
          <TrendItems>
            {trends.map((trend) => (
              <Choice key={trend} $height={16} $gap={1} $disabled>
                <Check disabled />
                {trend}
              </Choice>
            ))}
          </TrendItems>
          <ScrollBar>
            <ScrollArrow aria-label="Scroll up">
              <Svg w={7} h={4}>
                <path d="M0 4h7L3.500 0z" fill="#333" />
              </Svg>
            </ScrollArrow>
            <ScrollThumb />
            <ScrollArrow aria-label="Scroll down">
              <Arrow color="#333" />
            </ScrollArrow>
          </ScrollBar>
        </TrendList>
        <TrendChecks>
          <Choice $disabled>
            <Check disabled />
            Show Equation
          </Choice>
          <Choice $disabled>
            <Check disabled />
            Show R²
          </Choice>
        </TrendChecks>
      </TrendRow>
    </Group>
  );
}

function ExpressionFields() {
  return (
    <FieldGrid>
      <Choice>
        <Check defaultChecked />
        Enable
      </Choice>
      <Fields>
        <Choice>
          <Check />
          Conditional
        </Choice>
        <ConditionField aria-label="Condition" disabled />
        <FieldLabel htmlFor="label">Label</FieldLabel>
        <FieldBox>
          <TextField id="label" placeholder="<use expression>" />
          <MoreButton>...</MoreButton>
        </FieldBox>
        <FieldLabel htmlFor="definition">Definition</FieldLabel>
        <FieldBox $height={39}>
          <CodeField>
            <CodeHighlight aria-hidden="true">
              <Fn>count</Fn>({"{<"}
              <Field>Day</Field>={"{"}
              <Field>"Thursday"</Field>
              {"}>} "}
              <Field>Day</Field>)
            </CodeHighlight>
            <CodeInput id="definition" rows={1} defaultValue={'count({<Day={"Thursday"}>} Day)'} />
          </CodeField>
          <MoreButton>...</MoreButton>
        </FieldBox>
        <FieldLabel htmlFor="comment">Comment</FieldLabel>
        <FieldBox>
          <TextField id="comment" />
          <MoreButton>...</MoreButton>
        </FieldBox>
      </Fields>
    </FieldGrid>
  );
}

function DisplayOptions() {
  return (
    <Group $bottom={17}>
      <Legend>Display Options</Legend>
      <OptionLabel htmlFor="representation" $top={13}>
        Representation
      </OptionLabel>
      <Combo $width="162px">
        <DropDown id="representation">
          <option>Text</option>
        </DropDown>
        <Arrow />
      </Combo>
      <OptionLabel htmlFor="formatting" $top={69}>
        Image Formatting
      </OptionLabel>
      <Combo $width="162px">
        <DropDown id="formatting" disabled>
          <option>Fill with Aspect</option>
        </DropDown>
        <Arrow color="#9a9a9a" />
      </Combo>
      <HideRow>
        <Choice $disabled>
          <Check disabled />
          Hide Text When Image Missing
        </Choice>
      </HideRow>
    </Group>
  );
}

function TotalMode() {
  const [mode, setMode] = useState("none");
  const radio = (value, label) => (
    <Radio
      name="total"
      aria-label={label}
      checked={mode === value}
      onChange={() => setMode(value)}
    />
  );

  return (
    <Group $bottom={8}>
      <Legend>Total Mode</Legend>
      <TotalRows>
        <RadioRow $height={23}>
          <Choice $gap={4}>{radio("none")}No Totals</Choice>
        </RadioRow>
        <RadioRow $height={23}>
          <Choice $gap={4}>{radio("expression")}Expression Total</Choice>
        </RadioRow>
        <RadioRow $height={23}>
          <Choice $gap={6}>
            {radio("rows", "Aggregate of rows")}
            <Combo $width="111px">
              <DropDown aria-label="Aggregate" disabled>
                <option>Sum</option>
              </DropDown>
              <Arrow color="#9a9a9a" />
            </Combo>
          </Choice>
        </RadioRow>
        <OfRows>of Rows</OfRows>
      </TotalRows>
    </Group>
  );
}

function ChartProperties() {
  const [tab, setTab] = useState("Expressions");

  return (
    <Dialog role="dialog" aria-labelledby="dialog-title">
      <DialogTitle>
        <span id="dialog-title">Chart Properties [Shop Talk]</span>
        <CloseButton aria-label="Close">
          <Svg w={13} h={11}>
            <path d="m2.500 2 8 7M10.500 2l-8 7" stroke="#4b5563" strokeWidth="4" />
            <path d="m3 2.500 7 6M10 2.500l-7 6" stroke="#fff" strokeWidth="2" />
          </Svg>
        </CloseButton>
      </DialogTitle>
      <DialogBody>
        <TabStrip>
          <TabList role="tablist">
            {tabs.map((name) => (
              <Tab
                key={name}
                role="tab"
                aria-selected={tab === name}
                $active={tab === name}
                onClick={() => setTab(name)}
              >
                {name}
              </Tab>
            ))}
          </TabList>
          <TabScroll aria-label="Previous tabs">
            <Svg w={4} h={5}>
              <path d="M3 0v5L0 2.500z" fill="#4a4f6a" />
            </Svg>
          </TabScroll>
          <TabScroll aria-label="Next tabs">
            <Svg w={4} h={5}>
              <path d="M1 0v5l3-2.500z" fill="#4a4f6a" />
            </Svg>
          </TabScroll>
        </TabStrip>
        <Panel>
          <div>
            <ExpressionList />
            <Accumulation />
            <Trendlines />
          </div>
          <Settings>
            <ExpressionFields />
            <RelativeRow>
              <Choice>
                <Check />
                Relative
              </Choice>
            </RelativeRow>
            <Groups>
              <DisplayOptions />
              <TotalMode />
            </Groups>
          </Settings>
        </Panel>
        <Footer>
          <PushButton>OK</PushButton>
          <PushButton>Cancel</PushButton>
          <PushButton disabled>Apply</PushButton>
          <PushButton>Help</PushButton>
        </Footer>
      </DialogBody>
    </Dialog>
  );
}

function App() {
  return (
    <AppCont>
      <GlobalStyle />
      <WindowTitle>
        <Svg>
          <rect x="1" y="2" width="13" height="13" rx="3" fill="#4fae2c" />
          <circle cx="7" cy="8" r="4" fill="#3d4a3d" stroke="#fff" strokeWidth="2" />
          <path d="m9 11 3 3" stroke="#fff" strokeWidth="2" />
        </Svg>
        {"QlikView x64 - [C:\\Users\\oaderonm\\Documents\\Test.qvw*]"}
      </WindowTitle>
      <CommandArea>
        <MenuBar>
          <Grip $width={5} />
          {menus.map((menu) => (
            <MenuItem key={menu}>{menu}</MenuItem>
          ))}
        </MenuBar>
        <Toolbars />
      </CommandArea>
      <SheetTabs>
        <SheetTab>Main</SheetTab>
      </SheetTabs>
      <Workspace>
        <StoreTalk />
        <ChartProperties />
      </Workspace>
    </AppCont>
  );
}

export default App;
